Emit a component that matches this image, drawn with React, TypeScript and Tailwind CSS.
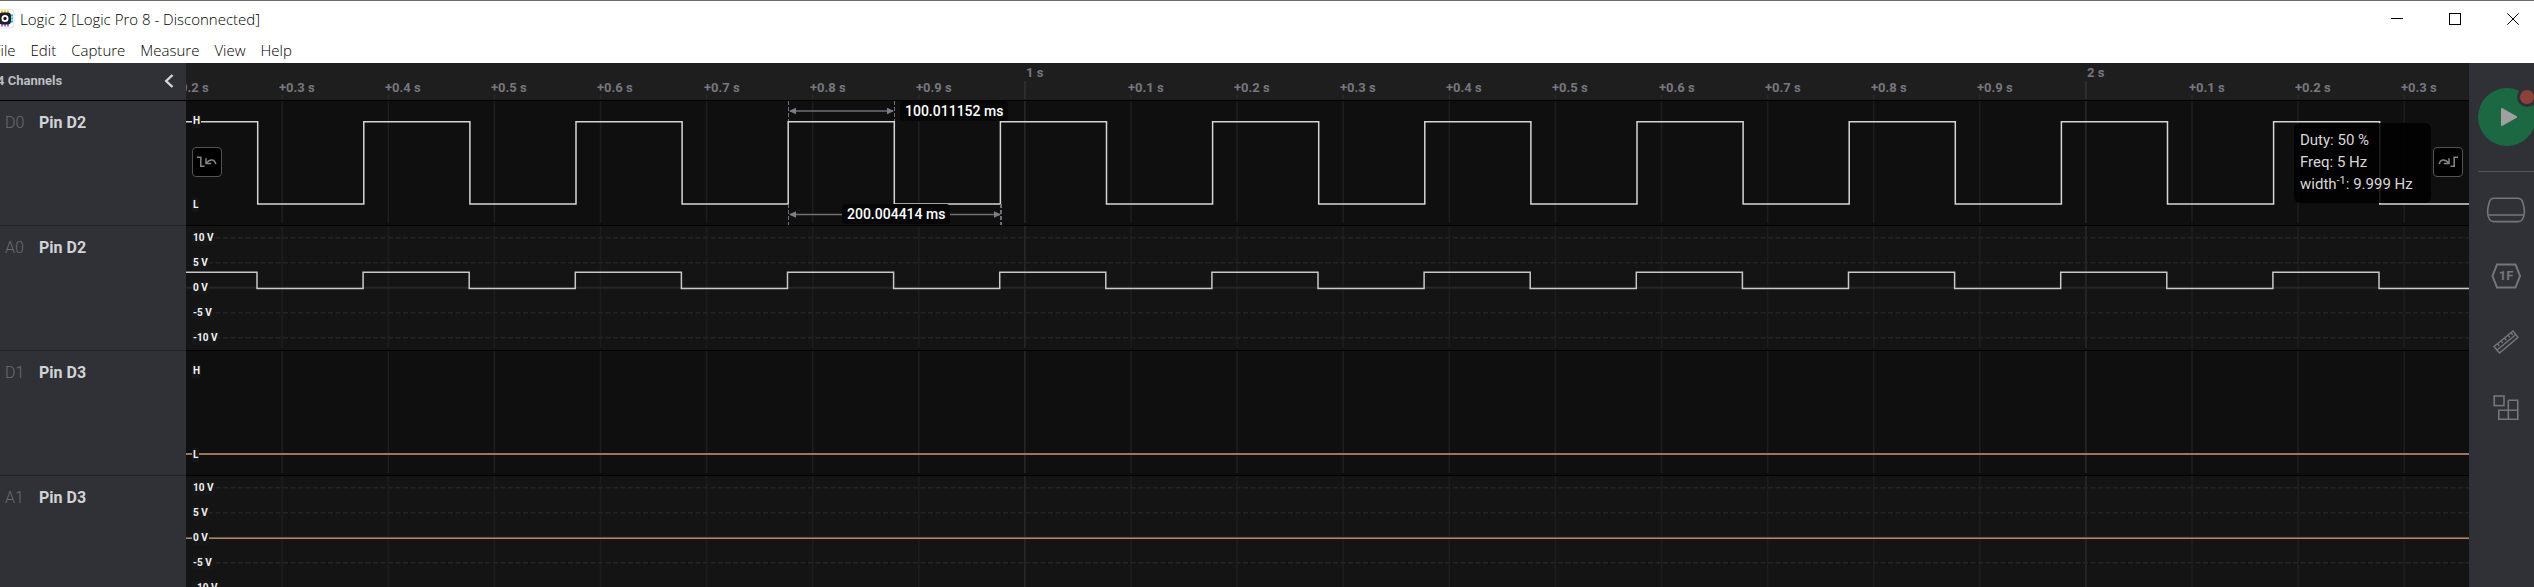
import React from "react";

const PERIOD = 106.1;
const FIRST_EDGE = 71.7;
const FIRST_TICK = 96.2;
const TICK_COUNT = 27;
const EDGE_COUNT = 21;

const ticks = Array.from({ length: TICK_COUNT }, (_, i) => {
  const tenth = (i + 2) % 10;
  const second = Math.floor((i + 2) / 10);
  return {
    x: FIRST_TICK + PERIOD * (i - 1),
    major: tenth === 0,
    label: tenth === 0 ? `${second} s` : `+0.${tenth} s`,
  };
}).slice(0, 22);

function squarePath(high: number, low: number, shift: number) {
  let d = `M-2 ${high}`;
  for (let k = 0; k < EDGE_COUNT; k++) {
    const x = (FIRST_EDGE + shift + PERIOD * k).toFixed(1);
    d += `H${x}V${k % 2 === 0 ? low : high}`;
  }
  return d + "H6000";
}

function Grid({ height }: { height: number }) {
  return (
    <g>
      {ticks.map((t) => (
        <line
          key={t.x}
          x1={t.x}
          x2={t.x}
          y1={0}
          y2={height}
          stroke={t.major ? "#27282b" : "#1d1d1f"}
          strokeWidth={1.6}
        />
      ))}
    </g>
  );
}

function Divisions() {
  return (
    <g stroke="#242427" strokeWidth={1.5}>
      {[11.7, 36.7, 86.7, 111.7].map((y) => (
        <line key={y} x1={7} x2={6000} y1={y} y2={y} strokeDasharray="5 2.5" />
      ))}
      <line x1={0} x2={6000} y1={61.7} y2={61.7} stroke="#26262a" strokeWidth={2} />
    </g>
  );
}

function LevelLabel({ text, place }: { text: string; place: string }) {
  return (
    <span
      className={`absolute left-1.5 rounded-xs bg-[#161719] px-px text-[10px] font-bold leading-[14px] text-[#f2f2f2] ${place}`}
    >
      {text}
    </span>
  );
}

function DigitalLabels() {
  return (
    <>
      <LevelLabel text="H" place="top-[13px]" />
      <LevelLabel text="L" place="top-[97px]" />
    </>
  );
}

function AnalogLabels() {
  return (
    <>
      <LevelLabel text="10 V" place="top-[5px]" />
      <LevelLabel text="5 V" place="top-[30px]" />
      <LevelLabel text="0 V" place="top-[55px]" />
      <LevelLabel text="-5 V" place="top-[80px]" />
      <LevelLabel text="-10 V" place="top-[105px]" />
    </>
  );
}

function Channel({
  id,
  name,
  analog,
  children,
}: {
  id: string;
  name: string;
  analog?: boolean;
  children: React.ReactNode;
}) {
  return (
    <section className="flex h-[125px] shrink-0">
      <div className="flex w-[186px] shrink-0 border-b border-[#222327] bg-[#303136] pl-[5px] pt-2.5 leading-6">
        <span className="w-[34px] text-base font-light text-[#6a6b70]">{id}</span>
        <span className="text-base font-bold text-[#d2d3d6]">{name}</span>
      </div>
      <div
        className={`relative min-w-0 flex-1 overflow-hidden border-b border-black ${
          analog ? "bg-[#141414]" : "bg-[#0f0f0f]"
        }`}
      >
        {children}
      </div>
    </section>
  );
}

function Measurements() {
  return (
    <g stroke="#6f7079" fill="#7c7d87">
      <g strokeWidth={1} strokeDasharray="4 2">
        <path d="M602.5 0V20M708.5 0V20M602.5 103V124" fill="none" />
        <path d="M815 103V124" strokeWidth={2} fill="none" />
      </g>
      <path d="M604 10H707M604 113.5H814" strokeWidth={1.3} fill="none" />
      <g stroke="none">
        <path d="M603 10L610 6.7V13.3Z" />
        <path d="M708 10L701 6.7V13.3Z" />
        <path d="M603 113.5L610 110.2V116.8Z" />
        <path d="M815 113.5L808 110.2V116.8Z" />
      </g>
    </g>
  );
}

function EdgeIcon({ flip }: { flip?: boolean }) {
  return (
    <svg
      viewBox="0 0 28 28"
      className={`size-7 ${flip ? "-scale-x-100" : ""}`}
      fill="none"
      stroke="#85868d"
      strokeWidth={1.5}
    >
      <path d="M4 9.2H7.8V18.3H11.5" />
      <path d="M13 10.3V15.5H18.2" />
      <path d="M13.4 15.1C16.5 10.9 21.6 10.5 22.8 16.1" />
    </svg>
  );
}

function SideButton({ label, children }: { label: string; children: React.ReactNode }) {
  return (
    <button type="button" aria-label={label} className="flex size-10 shrink-0 items-center justify-center text-[#75767b]">
      {children}
    </button>
  );
}

function TitleBar() {
  return (
    <header className="flex h-10 shrink-0 items-center border-t border-[#6b6b6b] pb-1 pr-[15px]">
      <svg viewBox="0 0 20 20" className="-ml-[5px] size-5 shrink-0">
        <rect x="0.5" y="0.5" width="18.5" height="18.5" rx="3.5" fill="#fafafa" stroke="#e4e4e6" />
        <path d="M7 1.5V4M10 1.5V4M13 1.5V4" stroke="#f5b921" strokeWidth="1.8" />
        <path d="M15.5 6.5H18M15.5 9.5H18M15.5 12.5H18" stroke="#20b5ea" strokeWidth="1.8" />
        <path d="M7 15V17.5M10 15V17.5M13 15V17.5" stroke="#a94fe6" strokeWidth="1.8" />
        <rect x="4" y="3.5" width="12" height="12" rx="3.5" fill="#1d1f26" />
        <circle cx="10" cy="9.5" r="2.6" fill="none" stroke="#fff" strokeWidth="1.8" />
      </svg>
      <h1 className="ml-[5px] flex-1 font-['Open_Sans','Noto_Sans',sans-serif] text-[15px] font-light leading-5 text-black">
        Logic 2 [Logic Pro 8 - Disconnected]
      </h1>
      <div className="flex items-center gap-[46px] text-black">
        <button type="button" aria-label="Minimize">
          <svg viewBox="0 0 12 12" className="block size-3" stroke="currentColor">
            <path d="M0 5.5H12" />
          </svg>
        </button>
        <button type="button" aria-label="Maximize">
          <svg viewBox="0 0 12 12" className="block size-3" stroke="currentColor" fill="none">
            <rect x=".5" y=".5" width="11" height="11" />
          </svg>
        </button>
        <button type="button" aria-label="Close">
          <svg viewBox="0 0 12 12" className="block size-3" stroke="currentColor">
            <path d="M.3.3L11.7 11.7M11.7.3L.3 11.7" />
          </svg>
        </button>
      </div>
    </header>
  );
}

function MenuBar() {
  return (
    <nav className="-ml-[7px] flex h-[23px] shrink-0 items-center gap-[15px] pb-1 font-['Open_Sans','Noto_Sans',sans-serif] text-[15px] font-light leading-5 text-black">
      {["File", "Edit", "Capture", "Measure", "View", "Help"].map((m) => (
        <button key={m} type="button">
          {m}
        </button>
      ))}
    </nav>
  );
}

function Sidebar() {
  return (
    <aside className="flex w-[65px] shrink-0 flex-col bg-[#303136] pl-[9px] pt-[25px]">
      <button type="button" aria-label="Start capture" className="relative size-[58px] shrink-0 rounded-full bg-[#1c6843]">
        <svg viewBox="0 0 58 58" className="size-[58px]">
          <path d="M24 21L38.2 29L24 37Z" fill="#a0a0a3" stroke="#a0a0a3" strokeWidth="2" strokeLinejoin="round" />
        </svg>
        <span className="absolute -top-px left-[39px] size-5 rounded-full border-[3px] border-[#303136] bg-[#8c4238]" />
      </button>
      <hr className="mt-[25px] border-[#55565b]" />
      <div className="ml-2 mt-[18px] flex flex-col gap-[26px]">
        <SideButton label="Device">
          <svg viewBox="0 0 40 26" className="h-[26px] w-10" fill="none" stroke="currentColor" strokeWidth="1.6">
            <path d="M8 1.2H32C34.6 1.2 36 2.6 36.7 5.2C37.5 8.2 38.4 11 38.4 14.6C38.4 18 37.8 20.5 36.3 22.6C35.2 24.2 33.9 24.6 32 24.6H8C6.1 24.6 4.8 24.2 3.7 22.6C2.2 20.5 1.6 18 1.6 14.6C1.6 11 2.5 8.2 3.3 5.2C4 2.6 5.4 1.2 8 1.2Z" />
            <path d="M2.5 18H37.5" />
          </svg>
        </SideButton>
        <SideButton label="Analyzers">
          <span className="relative flex h-[26px] w-[30px] items-center justify-center">
            <svg viewBox="0 0 30 26" className="absolute inset-0 size-full" fill="none" stroke="currentColor" strokeWidth="2">
              <path d="M6 1.5H24.5L29 13L24.5 24.5H6L1.5 13Z" />
            </svg>
            <span className="text-[13px] font-bold leading-3">1F</span>
          </span>
        </SideButton>
        <SideButton label="Measurements">
          <svg viewBox="0 0 26 24" className="h-6 w-[26px]" fill="none" stroke="currentColor" strokeWidth="1.4">
            <path d="M1 16.5L20 1L25 7.3L6.5 23Z" />
            <path d="M4 20L23 4.6" strokeWidth="1.3" />
            <path d="M4.5 13.7L6.3 15.9M8 10.9L9.8 13.1M11.5 8L13.3 10.2M15 5.2L16.8 7.4M18 2.8L19.8 5" />
          </svg>
        </SideButton>
        <SideButton label="Extensions">
          <svg viewBox="0 0 26 26" className="size-[26px]" fill="none" stroke="currentColor" strokeWidth="1.6">
            <rect x="1.2" y="1" width="9.8" height="9.6" />
            <path d="M15.3 5.3H24.8V24.2H5.8V15.2H24.8M15.3 5.3V24.2" />
          </svg>
        </SideButton>
      </div>
    </aside>
  );
}

export default function App() {
  return (
    <div className="flex h-screen flex-col overflow-hidden bg-white font-[Roboto,'Liberation_Sans',sans-serif]">
      <TitleBar />
      <MenuBar />
      <main className="flex min-h-0 flex-1">
        <div className="flex min-w-0 flex-1 flex-col overflow-hidden bg-[#141414]">
          <div className="flex h-[38px] shrink-0 border-b border-black">
            <div className="flex w-[186px] shrink-0 items-center justify-between bg-[#303136] pb-0.5 pr-3">
              <span className="-ml-[3px] text-[13px] font-bold leading-4 text-[#bcbdc1]">4 Channels</span>
              <button type="button" aria-label="Collapse channels">
                <svg viewBox="0 0 10 14" className="block h-3.5 w-2.5" fill="none" stroke="#d6d6d8" strokeWidth="2.4">
                  <path d="M8.5 1L2.2 7L8.5 13" />
                </svg>
              </button>
            </div>
            <div className="relative min-w-0 flex-1 overflow-hidden bg-[#1e1e1e]">
              <svg className="absolute inset-0 size-full">
                {ticks.map((t) => (
                  <line
                    key={t.x}
                    x1={t.x}
                    x2={t.x}
                    y1={t.major ? 18 : 32}
                    y2={36}
                    stroke={t.major ? "#303134" : "#2a2a2c"}
                    strokeWidth={1.6}
                  />
                ))}
              </svg>
              {ticks.map((t) => (
                <span
                  key={t.x}
                  className={`absolute whitespace-nowrap text-[13px] font-bold leading-4 text-[#76777f] ${
                    t.major ? "top-0.5" : "top-[17px]"
                  }`}
                  style={{ left: Math.round(t.x - (t.major ? -1 : 3)) }}
                >
                  {t.label}
                </span>
              ))}
            </div>
          </div>

          <Channel id="D0" name="Pin D2">
            <svg className="absolute inset-0 size-full">
              <Grid height={122} />
              <path d={squarePath(20.7, 103, 0)} fill="none" stroke="#d6d6d6" strokeWidth={1.5} />
              <Measurements />
            </svg>
            <DigitalLabels />
            <button
              type="button"
              aria-label="Previous edge"
              className="absolute left-1.5 top-[46px] size-[30px] rounded border border-[#525357] bg-black"
            >
              <EdgeIcon />
            </button>
            <span className="absolute left-[714px] top-0 rounded bg-[#060606] px-[5px] text-sm font-medium leading-5 text-white">
              100.011152 ms
            </span>
            <span className="absolute left-[656px] top-[103px] rounded bg-[#060606] px-[5px] text-sm font-medium leading-5 text-white">
              200.004414 ms
            </span>
            <div className="absolute right-[38px] top-[22px] w-[137px] rounded-md bg-black/85 px-1.5 pb-2 pt-1.5 text-[15px] leading-[22px] text-[#d8d8d8]">
              <p>Duty: 50 %</p>
              <p>Freq: 5 Hz</p>
              <p className="whitespace-nowrap">
                width<sup className="text-[11px]">-1</sup>: 9.999 Hz
              </p>
            </div>
            <button
              type="button"
              aria-label="Next edge"
              className="absolute right-1.5 top-[46px] size-[30px] rounded border border-[#525357] bg-black"
            >
              <EdgeIcon flip />
            </button>
          </Channel>

          <Channel id="A0" name="Pin D2" analog>
            <svg className="absolute inset-0 size-full">
              <Grid height={122} />
              <Divisions />
              <path d={squarePath(46.3, 62.5, -0.7)} fill="none" stroke="#c8c8c8" strokeWidth={1.5} />
            </svg>
            <AnalogLabels />
          </Channel>

          <Channel id="D1" name="Pin D3">
            <svg className="absolute inset-0 size-full">
              <Grid height={122} />
              <path d="M0 103H6000" stroke="#9c745f" strokeWidth={1.8} />
            </svg>
            <DigitalLabels />
          </Channel>

          <Channel id="A1" name="Pin D3" analog>
            <svg className="absolute inset-0 size-full">
              <Grid height={122} />
              <Divisions />
              <path d="M0 62.3H6000" stroke="#b98665" strokeWidth={1.6} />
            </svg>
            <AnalogLabels />
          </Channel>
        </div>
        <Sidebar />
      </main>
    </div>
  );
}
